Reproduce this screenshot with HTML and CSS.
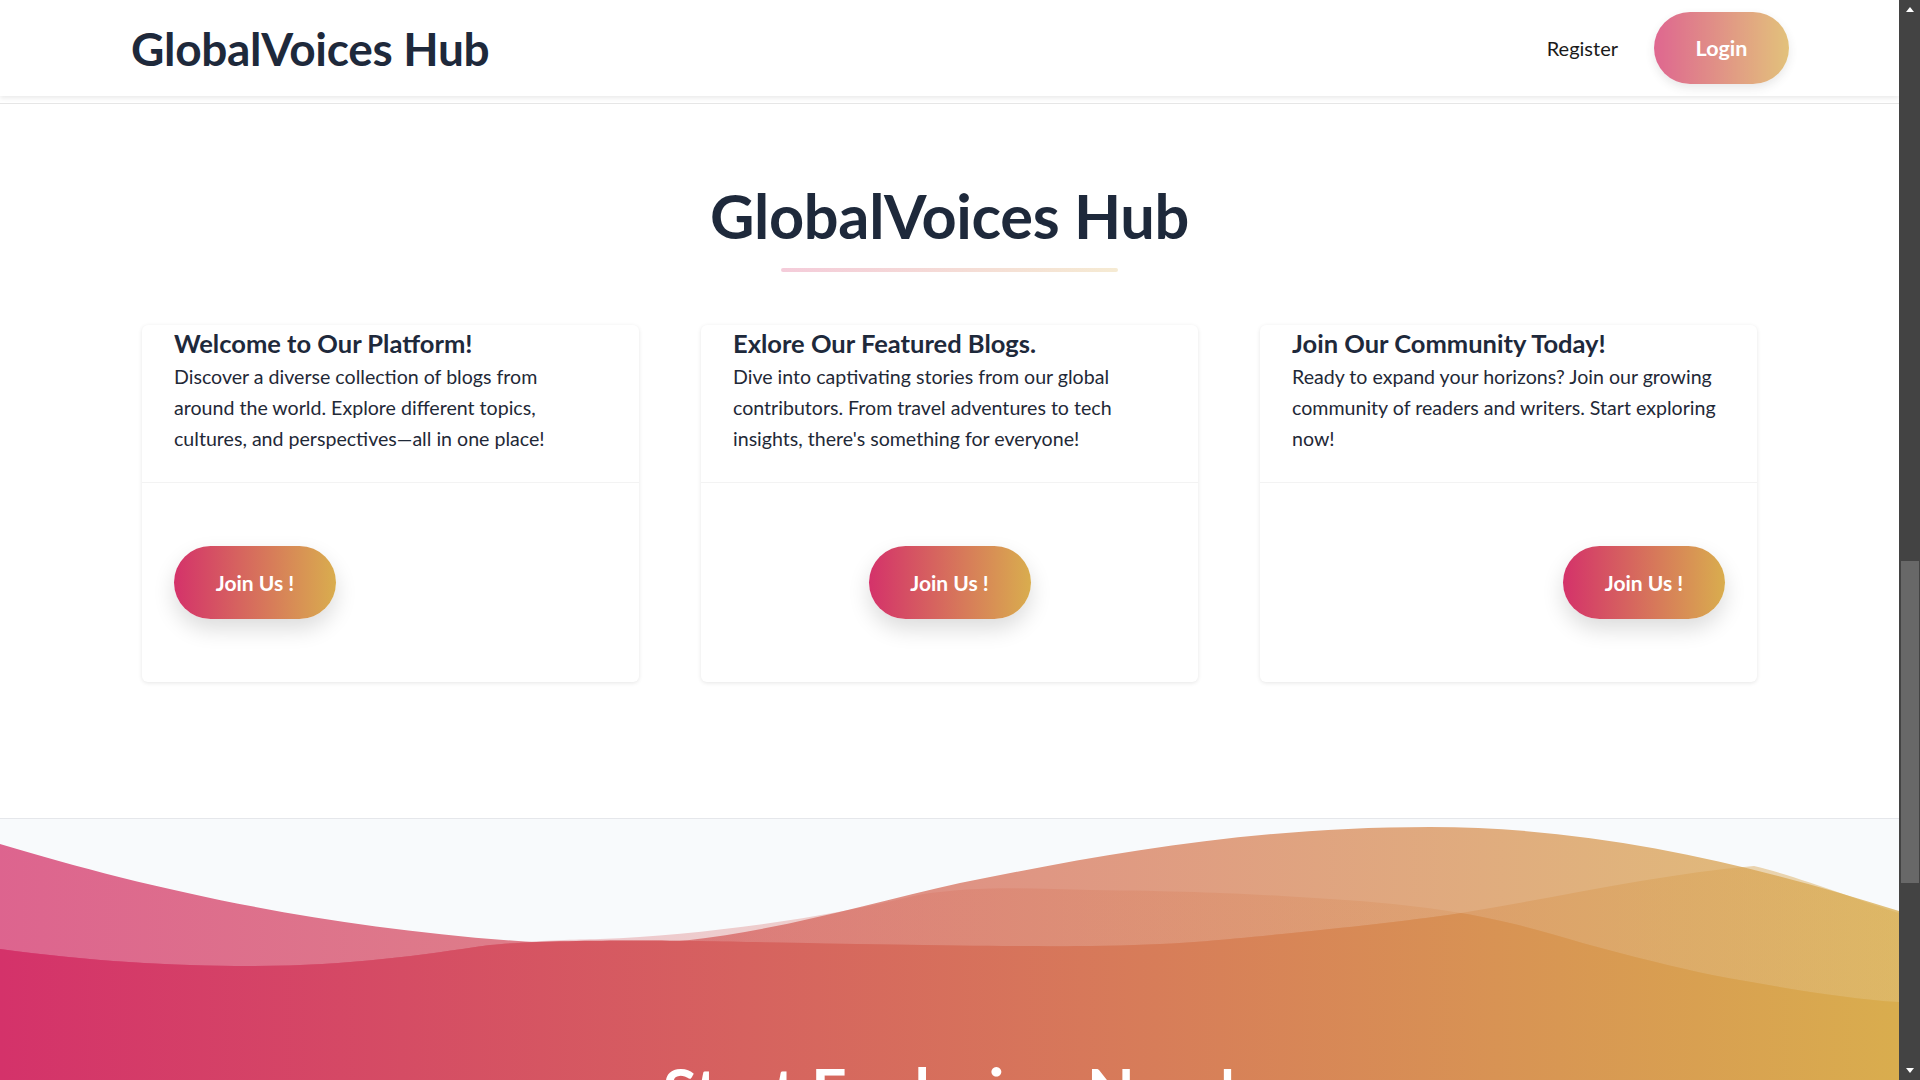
FILE: index.html
```html
<!DOCTYPE html>
<html lang="en">
<head>
<meta charset="utf-8">
<title>GlobalVoices Hub</title>
<link rel="stylesheet" href="styles.css">
</head>
<body>
<div class="screen">
  <div class="page">
    <header class="navbar">
      <div class="brand">GlobalVoices Hub</div>
      <nav class="nav-actions">
        <a class="nav-link" href="#">Register</a>
        <a class="btn-login" href="#">Login</a>
      </nav>
    </header>

    <section class="hero">
      <h1 class="hero-title">GlobalVoices Hub</h1>
      <div class="hero-underline"></div>

      <div class="cards">
        <article class="card">
          <div class="card-body">
            <h3 class="card-title">Welcome to Our Platform!</h3>
            <p class="card-text">Discover a diverse collection of blogs from around the world. Explore different topics, cultures, and perspectives—all in one place!</p>
          </div>
          <div class="card-footer footer-start">
            <a class="btn-join" href="#">Join Us !</a>
          </div>
        </article>

        <article class="card">
          <div class="card-body">
            <h3 class="card-title">Exlore Our Featured Blogs.</h3>
            <p class="card-text">Dive into captivating stories from our global contributors. From travel adventures to tech insights, there's something for everyone!</p>
          </div>
          <div class="card-footer footer-center">
            <a class="btn-join" href="#">Join Us !</a>
          </div>
        </article>

        <article class="card">
          <div class="card-body">
            <h3 class="card-title">Join Our Community Today!</h3>
            <p class="card-text">Ready to expand your horizons? Join our growing community of readers and writers. Start exploring now!</p>
          </div>
          <div class="card-footer footer-end">
            <a class="btn-join" href="#">Join Us !</a>
          </div>
        </article>
      </div>
    </section>

    <section class="cta">
      <svg class="waves" viewBox="0 0 1899 190" preserveAspectRatio="none" aria-hidden="true">
        <defs>
          <linearGradient id="wg" x1="0" y1="0" x2="1899" y2="0" gradientUnits="userSpaceOnUse">
            <stop offset="0" stop-color="#d4326a"/>
            <stop offset="1" stop-color="#d9ad4e"/>
          </linearGradient>
        </defs>
        <path class="wave wave-p" d="M0,25 C150,70 330,112 563,125 C720,133 840,90 960,64 C1100,36 1250,8 1430,8 C1600,8 1760,48 1899,92 L1899,190 L0,190 Z"/>
        <path class="wave wave-q" d="M0,130 C90,142 170,147 250,147 C350,147 420,136 490,126 C540,121 570,121 600,120 C700,116 820,100 918,76 C980,66 1040,70 1091,71 C1180,72 1230,74 1282,77 C1350,81 1400,84 1461,94 C1520,104 1560,118 1601,129 C1650,142 1690,152 1728,159 C1790,170 1850,180 1899,183 L1899,190 L0,190 Z"/>
        <path class="wave wave-r" d="M0,130 C90,142 170,147 250,147 C350,147 420,136 490,126 C540,121 640,121 700,122 C800,124 1000,128 1091,127 C1180,126 1230,120 1282,115 C1350,108 1400,103 1461,94 C1560,78 1660,55 1754,47 C1800,58 1860,82 1899,94 L1899,190 L0,190 Z"/>
        <path class="wave wave-base" d="M0,130 C90,142 170,147 250,147 C350,147 420,136 490,126 C540,121 640,121 700,122 C800,124 1000,128 1091,127 C1180,126 1230,120 1282,115 C1350,108 1400,103 1461,94 C1520,104 1560,118 1601,129 C1650,142 1690,152 1728,159 C1790,170 1850,180 1899,183 L1899,190 L0,190 Z"/>
      </svg>
      <div class="cta-body">
        <h2 class="cta-title">Start Exploring Now!</h2>
      </div>
    </section>
  </div>

  <div class="scrollbar" aria-hidden="true">
    <div class="sb-arrow sb-up"></div>
    <div class="sb-track">
      <div class="sb-thumb"></div>
    </div>
    <div class="sb-arrow sb-down"></div>
  </div>
</div>
</body>
</html>
```

FILE: styles.css
```css
* { box-sizing: border-box; }

html, body {
  margin: 0;
  padding: 0;
  height: 1080px;
  overflow: hidden;
  background: #ffffff;
}

body {
  font-family: "Lato", "Open Sans", sans-serif;
  color: #1e293b;
}

.screen {
  display: flex;
  width: 1920px;
  height: 1080px;
}

.page {
  flex: 1;
  min-width: 0;
  height: 1080px;
  overflow: hidden;
  background: #ffffff;
}

/* ---------- navbar ---------- */
.navbar {
  height: 96px;
  display: flex;
  align-items: center;
  justify-content: space-between;
  padding: 0 110px 0 131px;
  background: #ffffff;
  box-shadow: 0 2px 5px rgba(0, 0, 0, 0.09);
  position: relative;
  z-index: 2;
}

.brand {
  font-size: 46px;
  font-weight: 700;
  color: #1e293b;
  letter-spacing: -0.3px;
}

.nav-actions {
  display: flex;
  align-items: center;
  gap: 36px;
}

.nav-link {
  font-size: 20px;
  color: #1a1a1a;
  text-decoration: none;
}

.btn-login {
  display: flex;
  align-items: center;
  justify-content: center;
  width: 135px;
  height: 72px;
  border-radius: 36px;
  background: linear-gradient(90deg, #d4326a, #d9ad4e);
  opacity: 0.74;
  color: #ffffff;
  font-size: 21.5px;
  font-weight: 700;
  text-decoration: none;
  box-shadow: 0 4px 10px rgba(0, 0, 0, 0.12);
}

/* ---------- hero ---------- */
.hero {
  margin-top: 7px;
  border-top: 1px solid #e6e6e6;
  padding: 75px 0 136px;
  display: flex;
  flex-direction: column;
  align-items: center;
}

.hero-title {
  margin: 0;
  font-size: 61.3px;
  line-height: 1.2;
  font-weight: 700;
  color: #1e293b;
  letter-spacing: -0.3px;
}

.hero-underline {
  width: 337px;
  height: 4px;
  margin-top: 15px;
  border-radius: 2px;
  background: linear-gradient(90deg, #d4326a, #d9ad4e);
  opacity: 0.25;
}

.cards {
  margin-top: 53px;
  display: grid;
  grid-template-columns: repeat(3, 497px);
  gap: 62px;
  justify-content: center;
}

.card {
  background: #ffffff;
  border-radius: 6px;
  box-shadow: 0 1px 4px rgba(0, 0, 0, 0.1);
  display: flex;
  flex-direction: column;
}

.card-body {
  padding: 0 32px 28px;
}

.card-title {
  margin: 0;
  font-size: 25.5px;
  line-height: 36px;
  font-weight: 700;
  color: #1e293b;
}

.card-text {
  margin: 0;
  max-width: 426.5px;
  font-size: 19.6px;
  line-height: 31px;
  color: #1f2937;
}

.card-footer {
  border-top: 1px solid #f3f3f3;
  padding: 63px 32px;
  display: flex;
}

.footer-start { justify-content: flex-start; }
.footer-center { justify-content: center; }
.footer-end { justify-content: flex-end; }

.btn-join {
  display: flex;
  align-items: center;
  justify-content: center;
  width: 162px;
  height: 73px;
  border-radius: 37px;
  background: linear-gradient(90deg, #d4326a, #d9ad4e);
  color: #ffffff;
  font-size: 21px;
  font-weight: 700;
  text-decoration: none;
  box-shadow: 0 10px 22px rgba(0, 0, 0, 0.14);
}

/* ---------- CTA with waves ---------- */
.cta {
  border-top: 1px solid #e5e7eb;
  background: #f8fafc;
}

.waves {
  display: block;
  width: 100%;
  height: 190px;
}

.wave { fill: url(#wg); }
.wave-p { opacity: 0.75; }
.wave-q { opacity: 0.3; }
.wave-r { opacity: 0.45; }
.wave-base { opacity: 1; }

.cta-body {
  background: linear-gradient(90deg, #d4326a, #d9ad4e);
  padding: 43px 0 80px;
  display: flex;
  justify-content: center;
}

.cta-title {
  margin: 0;
  font-size: 62px;
  line-height: 1.2;
  font-weight: 700;
  color: #ffffff;
}

/* ---------- scrollbar ---------- */
.scrollbar {
  width: 21px;
  height: 1080px;
  background: #434343;
  display: flex;
  flex-direction: column;
  align-items: center;
}

.sb-arrow {
  width: 0;
  height: 0;
  border-left: 4px solid transparent;
  border-right: 4px solid transparent;
}

.sb-up {
  margin-top: 7px;
  border-bottom: 5px solid #ffffff;
}

.sb-down {
  margin-bottom: 7px;
  border-top: 5px solid #ffffff;
}

.sb-track {
  flex: 1;
  width: 100%;
  padding: 549px 1px 0 2px;
}

.sb-thumb {
  height: 322px;
  background: #686868;
}
```
